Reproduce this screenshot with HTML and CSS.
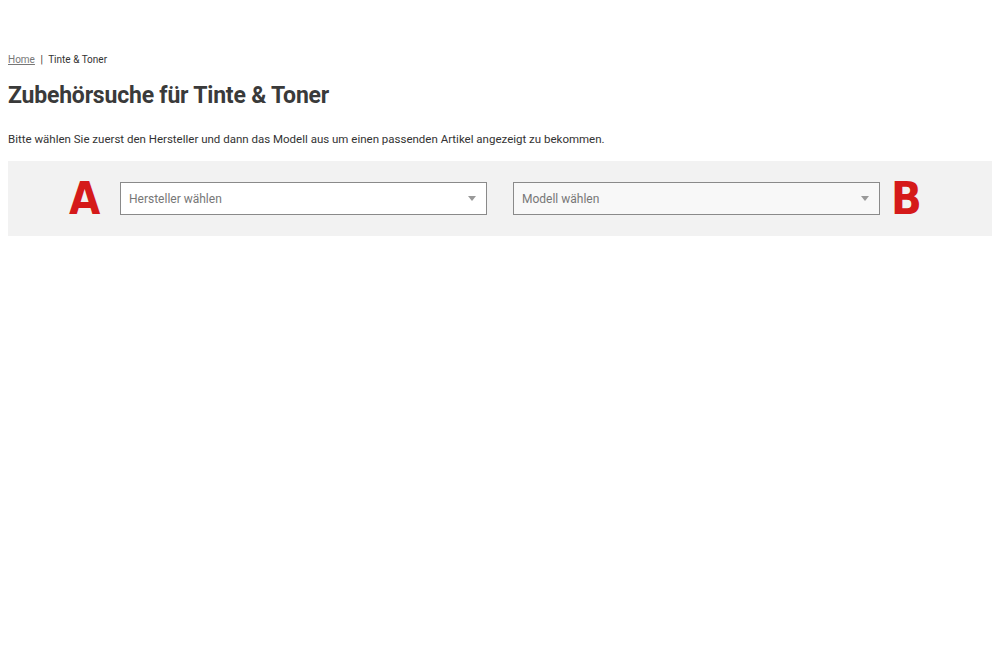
FILE: index.html
```html
<!DOCTYPE html>
<html lang="de">

<head>
    <meta charset="UTF-8">
    <meta name="viewport" content="width=device-width, initial-scale=1.0">
    <title>Zubehörsuche für Tinte &amp; Toner</title>
    <link rel="stylesheet" href="styles.css">
</head>

<body>
    <div class="page">
        <nav class="breadcrumb">
            <a href="#">Home</a>
            <span class="sep">|</span>
            <span>Tinte &amp; Toner</span>
        </nav>

        <h1>Zubehörsuche für Tinte &amp; Toner</h1>

        <p class="intro">Bitte wählen Sie zuerst den Hersteller und dann das Modell aus um einen passenden Artikel angezeigt zu bekommen.</p>

        <div class="finder">
            <span class="step step-a">A</span>
            <div class="select">
                <span>Hersteller wählen</span>
                <span class="arrow"></span>
            </div>
            <div class="select disabled">
                <span>Modell wählen</span>
                <span class="arrow"></span>
            </div>
            <span class="step step-b">B</span>
        </div>
    </div>
</body>

</html>
```

FILE: styles.css
```css
* {
    margin: 0;
    padding: 0;
    box-sizing: border-box;
}

body {
    background-color: #fff;
    font-family: Roboto, "Liberation Sans", sans-serif;
    color: #333;
}

.page {
    padding: 53px 8px 0;
}

/* Breadcrumb */
.breadcrumb {
    font-size: 10px;
    line-height: 13px;
    color: #333;
}

.breadcrumb a {
    color: #777;
    text-decoration: underline;
}

.breadcrumb .sep {
    margin: 0 3px;
}

h1 {
    margin-top: 15px;
    font-size: 23px;
    line-height: 30px;
    font-weight: 700;
    color: #3a3a3a;
    letter-spacing: -0.2px;
}

.intro {
    margin-top: 20px;
    font-size: 11.5px;
    line-height: 16px;
    color: #333;
}

/* Finder panel */
.finder {
    margin-top: 14px;
    height: 75px;
    background-color: #f2f2f2;
    display: flex;
    align-items: center;
    padding-left: 61px;
}

.step {
    font-family: "DejaVu Sans Condensed", "DejaVu Sans", sans-serif;
    font-weight: 700;
    font-size: 45px;
    line-height: 1;
    color: #d51a1a;
}

.step-a {
    width: 29px;
    margin-right: 22px;
}

.step-b {
    margin-left: 11px;
}

.select {
    width: 367px;
    height: 33px;
    border: 1px solid #8a8a8a;
    background-color: #fff;
    display: flex;
    align-items: center;
    justify-content: space-between;
    padding: 0 10px 0 8px;
    font-size: 12px;
    color: #777;
}

.select + .select {
    margin-left: 26px;
}

.select.disabled {
    background-color: #f8f8f8;
}

.arrow {
    width: 0;
    height: 0;
    border-left: 4.5px solid transparent;
    border-right: 4.5px solid transparent;
    border-top: 5px solid #999;
}
```
